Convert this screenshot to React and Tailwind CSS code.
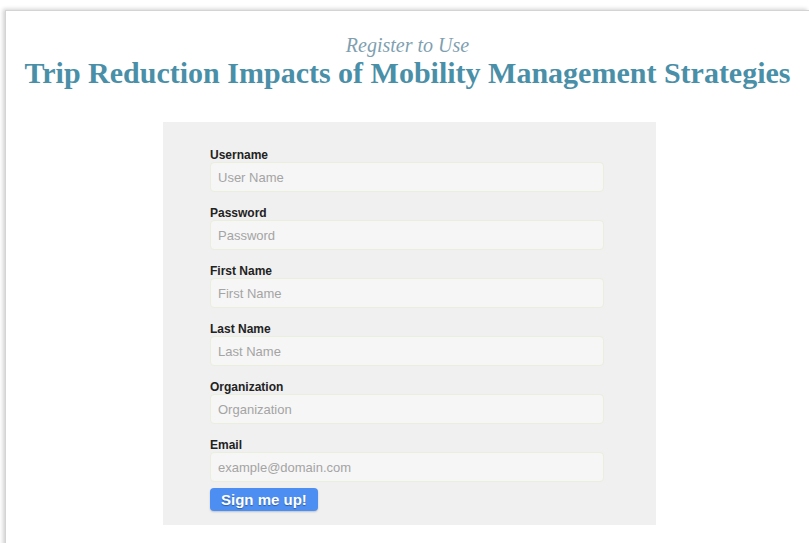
const fields = [
  { label: "Username", placeholder: "User Name", type: "text" },
  { label: "Password", placeholder: "Password", type: "password" },
  { label: "First Name", placeholder: "First Name", type: "text" },
  { label: "Last Name", placeholder: "Last Name", type: "text" },
  { label: "Organization", placeholder: "Organization", type: "text" },
  { label: "Email", placeholder: "example@domain.com", type: "email" },
];

export default function App() {
  return (
    <div className="w-[809px] h-[543px] overflow-hidden bg-white pl-[5px] pt-[10px]">
      <div className="h-[560px] bg-white border-l border-t border-[#d4d4d4] shadow-[-2px_-1px_4px_rgba(0,0,0,0.18)]">
        {/* Heading */}
        <div className="pt-[23px] text-center font-['Liberation_Serif',serif]">
          <p className="text-[20px] leading-[22px] italic text-[#7f9fb0]">Register to Use</p>
          <h1 className="text-[30px] leading-[34px] font-bold text-[#4a8fa8]">
            Trip Reduction Impacts of Mobility Management Strategies
          </h1>
        </div>

        {/* Registration form */}
        <form
          className="mt-[32px] ml-[157px] w-[493px] bg-[#f0f0f0] pt-[26px] pb-[14px] pl-[47px] font-['Liberation_Sans',Arial,sans-serif]"
          onSubmit={(e) => e.preventDefault()}
        >
          <div className="flex flex-col gap-[14px]">
            {fields.map((field) => (
              <div key={field.label}>
                <label className="block text-[12px] leading-[14px] font-bold text-[#222]">
                  {field.label}
                </label>
                <input
                  type={field.type}
                  placeholder={field.placeholder}
                  className="block w-[394px] h-[30px] px-[7px] rounded-[4px] bg-[#f6f6f6] border border-[#e9eedd] text-[13px] text-[#333] placeholder:text-[#a4a4a4] outline-none"
                />
              </div>
            ))}
          </div>
          <button
            type="submit"
            className="block mt-[6px] h-[23px] px-[11px] rounded-[4px] bg-[#4d8ef2] text-white text-[15px] leading-[23px] font-bold [text-shadow:0_1px_1px_rgba(0,0,0,0.35)] shadow-[0_1px_2px_rgba(0,0,0,0.2)]"
          >
            Sign me up!
          </button>
        </form>
      </div>
    </div>
  );
}
